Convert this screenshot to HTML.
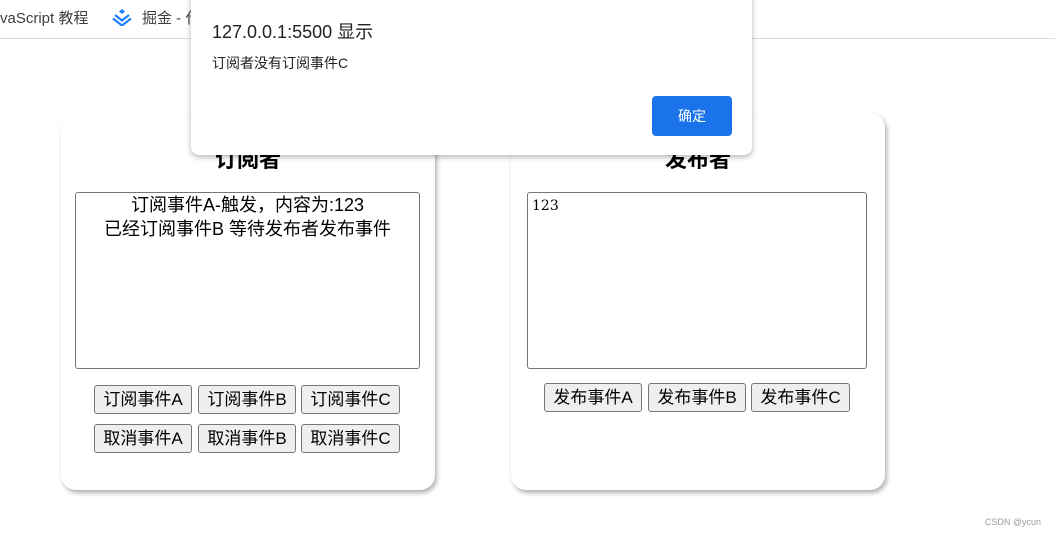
<!DOCTYPE html>
<html><head><meta charset="utf-8"><style>
body{margin:0;width:1055px;height:538px;background:#fff;position:relative;overflow:hidden;font-family:"Liberation Sans","Noto Sans CJK SC",sans-serif;}
.bar{position:absolute;left:0;top:0;width:1055px;height:38px;border-bottom:1px solid #dadce0;font-size:15px;color:#3c4043;}
.bar span{position:absolute;top:7px}
.card{position:absolute;top:113px;width:374px;height:377px;border-radius:15px;box-shadow:2px 3px 5px rgba(0,0,0,.3);background:#fff;}
.card h2{position:absolute;top:29px;left:0;width:100%;text-align:center;margin:0;font-size:22px;font-weight:bold;}
.ta{position:absolute;top:79px;height:177px;border:1px solid #767676;border-radius:3px;box-sizing:border-box;font-size:18px;line-height:24px;}
.btn{position:absolute;height:29px;border:1px solid #767676;border-radius:3px;background:#efefef;font-size:17px;line-height:27px;text-align:center;box-sizing:border-box;color:#000;}
.dlg{position:absolute;left:191px;top:-10px;width:561px;height:165px;background:#fff;border-radius:8px;box-shadow:0 2px 6px rgba(0,0,0,.3);}
</style></head><body>
<div class="bar"><span style="left:0">vaScript 教程</span>
<svg style="position:absolute;left:112px;top:8px" width="20" height="18" viewBox="0 0 20 18"><path d="M10 1l3 2.5-3 2.5-3-2.5z" fill="#1e80ff"/><path d="M3 7l7 5.5 7-5.5M1 10.5l9 7 9-7" stroke="#1e80ff" stroke-width="2.2" fill="none"/></svg>
<span style="left:142px">掘金 - 代</span></div>
<div class="card" style="left:61px"><h2>订阅者</h2>
<div class="ta" style="left:14px;width:345px;text-align:center;">订阅事件A-触发，内容为:123<br>已经订阅事件B 等待发布者发布事件</div>
<div class="btn" style="left:33px;top:272px;width:98px">订阅事件A</div>
<div class="btn" style="left:137px;top:272px;width:98px">订阅事件B</div>
<div class="btn" style="left:240px;top:272px;width:99px">订阅事件C</div>
<div class="btn" style="left:33px;top:311px;width:98px">取消事件A</div>
<div class="btn" style="left:137px;top:311px;width:98px">取消事件B</div>
<div class="btn" style="left:240px;top:311px;width:99px">取消事件C</div>
</div>
<div class="card" style="left:511px"><h2>发布者</h2>
<div class="ta" style="left:16px;width:340px;font-family:'DejaVu Serif',serif;font-size:14px;padding:3px 4px;line-height:20px;">123</div>
<div class="btn" style="left:33px;top:270px;width:98px">发布事件A</div>
<div class="btn" style="left:137px;top:270px;width:98px">发布事件B</div>
<div class="btn" style="left:240px;top:270px;width:99px">发布事件C</div>
</div>
<div class="dlg">
<div style="position:absolute;left:21px;top:28px;font-size:18px;color:#202124">127.0.0.1:5500 显示</div>
<div style="position:absolute;left:21px;top:63px;font-size:14px;color:#202124">订阅者没有订阅事件C</div>
<div style="position:absolute;left:461px;top:106px;width:80px;height:40px;background:#1a73e8;border-radius:4px;color:#fff;font-size:14px;line-height:40px;text-align:center">确定</div>
</div>
<div style="position:absolute;right:14px;top:517px;font-size:9px;color:#999">CSDN @ycun</div>
</body></html>
